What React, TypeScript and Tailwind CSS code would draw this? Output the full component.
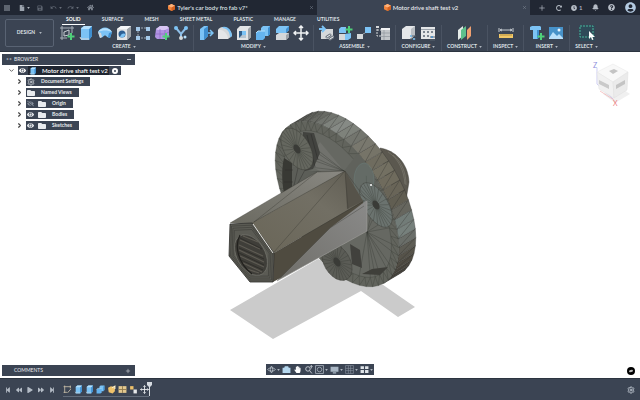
import { ReactNode, useState } from "react";
import { Bell, ChevronDown, ChevronRight, Plus, Settings, X } from "lucide-react";
import {
  FaBackward,
  FaClock,
  FaEye,
  FaEyeSlash,
  FaFile,
  FaFolder,
  FaForward,
  FaHandPaper,
  FaHome,
  FaPlay,
  FaQuestionCircle,
  FaRedoAlt,
  FaSave,
  FaStepBackward,
  FaStepForward,
  FaUserCircle,
} from "react-icons/fa";
import { MdApps, MdRedo, MdUndo } from "react-icons/md";

type Pt = [number, number];

const BLUE = "#7cc3f5";
const BLUE_DARK = "#3f8fd0";
const GREY = "#d5d8da";
const GREY_DARK = "#9ea4aa";
const GREEN = "#4fd07a";

function Glyph({ children, className = "size-4" }: { children: ReactNode; className?: string }) {
  return (
    <svg viewBox="0 0 16 16" className={className} fill="none" aria-hidden="true">
      {children}
    </svg>
  );
}

const greenPlus = <path d="M12 8v7M8.500 11.500h7" stroke={GREEN} strokeWidth="2" />;

const icons: Record<string, ReactNode> = {
  sketch: (
    <>
      <path d="M3 1v14M1 3h14M13 1v7M1 13h7" stroke="#aab1ba" />
      <path d="M5 11V7l5-2v5z" stroke="#c9ced4" />
      {greenPlus}
    </>
  ),
  extrude: (
    <>
      <path d="M3 3l3-2h8v10l-3 4H3z" fill={BLUE} />
      <path d="M11 4l3-3v10l-3 4z" fill={BLUE_DARK} />
      <path d="M3 4l3-3h8l-3 3z" fill="#b6e0fc" />
      <path d="M2 12l1 2h8" stroke={GREY} />
    </>
  ),
  revolve: (
    <>
      <path d="M1 7c3-6 11-6 14 0l-2 6-3-1c-1-2-3-2-4 0l-3 1z" fill={BLUE} />
      <path d="M1 7c3-5 11-5 14 0-4-2-10-2-14 0z" fill="#b6e0fc" />
      <path d="M12 8l3-1-2 6-2-1z" fill={BLUE_DARK} />
      <path d="M1 7l3 1 1 4-2 1z" fill={GREY} />
    </>
  ),
  hole: (
    <>
      <path d="M1 4l4-3h10v10l-4 4H1z" fill="#e2e4e6" />
      <path d="M11 4l4-3v10l-4 4z" fill={GREY_DARK} />
      <path d="M1 4l4-3h10l-4 3z" fill="#f6f7f8" />
      <circle cx="6" cy="9" r="3.500" fill="#2d5f93" />
      <path d="M4 12c1-4 4-4 5.500-3-1 3-2.500 4-5.500 3z" fill={BLUE} />
    </>
  ),
  pattern: (
    <>
      <path d="M3 3h10M3 13h10M3 3v10" stroke="#9ca6b2" strokeDasharray="2 1" />
      <path d="M1 2h4v4H1zM1 11h4v4H1zM11 2h4v4h-4zM11 11h4v4h-4z" fill="#a4c9ea" />
    </>
  ),
  form: (
    <>
      <path d="M2 4l4-3h7l2 2v8l-4 3H3l-2-2z" fill="#b193e2" />
      <path d="M2 4l4-3h7l2 2-4 2H4z" fill="#d8c6f4" />
      <path d="M6 4v10M1 9h10M11 5v8M11 9l4-2" stroke="#8a69c2" strokeWidth=".7" />
      {greenPlus}
    </>
  ),
  derive: (
    <>
      <path d="M3 3l5 6 5-6M8 9v5" stroke="#8fbfe8" strokeWidth="2" />
      <circle cx="3" cy="3" r="2" fill={BLUE} />
      <circle cx="13" cy="3" r="2" fill={BLUE} />
      <circle cx="8" cy="13" r="2" fill={GREY} />
      <circle cx="12" cy="12" r="1.500" fill="#b6e0fc" />
    </>
  ),
  pressPull: (
    <>
      <path d="M2 4l4-3h4v10l-4 4H2z" fill={BLUE} />
      <path d="M6 4l4-3v10l-4 4z" fill={BLUE_DARK} />
      <path d="M10 8h5M12 5l3 3-3 3" stroke={BLUE} strokeWidth="1.500" />
    </>
  ),
  fillet: (
    <>
      <path d="M1 14V6c0-3 3-4 5-4 5 0 9 5 9 9l-4 3z" fill={GREY} />
      <path d="M6 2c5-1 9 4 9 9l-2 1.500C13 7 10 3 5 3z" fill={BLUE} />
      <path d="M1 5c5-1 10 4 10 9H1z" fill="#e4e6e8" />
    </>
  ),
  shell: (
    <>
      <path d="M1 4l3-3h11v11l-3 3H1z" fill="#e2e4e6" />
      <path d="M12 4l3-3v11l-3 3z" fill={GREY_DARK} />
      <path d="M3 6h7v7H3z" fill="#315f8c" />
      <path d="M6 6h4v4H6z" fill={BLUE} />
      <path d="M3 13l3-3h4v3z" fill="#b6c4d0" />
    </>
  ),
  combine: (
    <>
      <path d="M6 3l2-2h7v8l-2 2H6z" fill={BLUE} />
      <path d="M13 3l2-2v8l-2 2z" fill={BLUE_DARK} />
      <path d="M1 8l2-2h7v7l-2 2H1z" fill="#65b4ef" />
      <path d="M1 8l2-2h7" stroke="#b6e0fc" />
    </>
  ),
  split: (
    <>
      <path d="M2 4l3-3h10v4l-3 3H2z" fill={BLUE} />
      <path d="M12 4l3-3v4l-3 3z" fill={BLUE_DARK} />
      <path d="M2 10l3-2h10v4l-3 3H2z" fill={GREY} />
      <path d="M12 10l3-2v4l-3 3z" fill={GREY_DARK} />
    </>
  ),
  move: (
    <path
      d="M8 1v14M1 8h14M6 3l2-2 2 2M6 13l2 2 2-2M3 6L1 8l2 2M13 6l2 2-2 2"
      stroke="#f0f2f4"
      strokeWidth="1.500"
    />
  ),
  insertPart: (
    <>
      <path d="M3 6l3-2h9v8l-3 2H3z" fill={GREY} />
      <path d="M1 4h6M4 1l3 3-3 3" stroke={BLUE} strokeWidth="1.800" />
      <path d="M9 12l3-2M12 14l3-2" stroke="#6e7680" strokeWidth="3" strokeLinecap="round" />
      <path d="M9 12l3-2M12 14l3-2" stroke="#f0f2f4" strokeLinecap="round" />
    </>
  ),
  newPart: (
    <>
      <path d="M2 4l2-2h5v6H2z" fill={BLUE} />
      <path d="M2 9h6v6H2z" fill={GREY} />
      <path d="M8 9l6-1v5l-3 2H8z" fill={BLUE} />
      <path d="M12 1v7M8.500 4.500h7" stroke={GREEN} strokeWidth="2" />
    </>
  ),
  joint: (
    <>
      <path d="M9 2h6v6H9z" fill={BLUE} />
      <path d="M1 9h6v5H1z" fill={GREY} />
      <path d="M7 9l2-1" stroke={GREY_DARK} />
    </>
  ),
  bom: (
    <>
      <path d="M2 1v10h4M2 5h4" stroke={GREY} strokeDasharray="2 1" />
      <path d="M6 3h9v12H6z" fill="#c2c6ca" />
      <path d="M6 3h9v2H6z" fill="#f2f3f4" />
      <path d="M6 8h9M6 11.500h9M9 5v10" stroke="#8f969e" strokeWidth=".7" />
      <path d="M1 1h3v2H1z" fill={GREY} />
    </>
  ),
  configure: (
    <>
      <path d="M1 4l4-3h9v9l-4 4H1z" fill="#e4e6e8" />
      <path d="M10 4l4-3v9l-4 4z" fill="#b9bec3" />
      <path d="M9 11h6M9 14h6" stroke="#59626e" />
      <path d="M10 10v2M13 13v2" stroke={BLUE} strokeWidth="1.500" />
    </>
  ),
  table: (
    <>
      <path d="M1 2h14v12H1z" fill="#e4e6e8" />
      <path d="M3 6h2v2H3zM7 6h2v2H7zM11 6h2v2h-2zM3 10h2v2H3zM7 10h2v2H7z" fill="#7c8590" />
      <path d="M1 4.500h14" stroke="#7c8590" strokeWidth=".7" />
      <path d="M10 12h5M10 15h5" stroke="#59626e" />
      <path d="M12 11v2" stroke={BLUE_DARK} strokeWidth="1.500" />
    </>
  ),
  construct: (
    <>
      <path d="M1 5l5-4v10l-5 4z" fill="#e6ebe9" />
      <path d="M4 5l5-4v10l-5 4z" fill="#5fc08c" />
      <path d="M10 5l4-4v10l-4 4z" fill="#f0a070" />
    </>
  ),
  inspect: (
    <>
      <path d="M1 9h14v4H1z" fill="#f2c867" />
      <path d="M3 9v2M5 9v2M7 9v2M9 9v2M11 9v2M13 9v2" stroke="#8a6c28" strokeWidth=".6" />
      <path d="M1 3v4M15 3v4M2 5h12M4 4L2 5l2 1M12 4l2 1-2 1" stroke="#c5cad0" />
    </>
  ),
  insert: (
    <>
      <path d="M1 2l2-1h8l1 1v3H9v9H4V5H1z" fill={BLUE} />
      <path d="M8 5h2v8l-2 1z" fill={BLUE_DARK} />
      {greenPlus}
    </>
  ),
  image: (
    <>
      <path d="M1 2h14v12H1z" fill="#4792c9" />
      <path d="M1 13l4-6 4 4 2-2 4 4v1H1z" fill="#b9dffa" />
      <circle cx="11" cy="5" r="1.500" fill="#e9f5fe" />
    </>
  ),
  select: (
    <>
      <path d="M1 1h13v11H1z" stroke="#4bb59a" strokeDasharray="2 1" />
      <path d="M10 6v8l2-2 1 3 1.500-.6L13.300 12H16z" fill="#fff" />
    </>
  ),
};

type Group = { label: string; tools: string[]; wide?: boolean };

const groups: Group[] = [
  {
    label: "CREATE",
    tools: ["sketch", "extrude", "revolve", "hole", "pattern", "form", "derive"],
  },
  { label: "MODIFY", tools: ["pressPull", "fillet", "shell", "combine", "split", "move"] },
  { label: "ASSEMBLE", tools: ["insertPart", "newPart", "joint", "bom"] },
  { label: "CONFIGURE", tools: ["configure", "table"], wide: true },
  { label: "CONSTRUCT", tools: ["construct"], wide: true },
  { label: "INSPECT", tools: ["inspect"], wide: true },
  { label: "INSERT", tools: ["insert", "image"], wide: true },
  { label: "SELECT", tools: ["select"], wide: true },
];

const workspaces = ["SOLID", "SURFACE", "MESH", "SHEET METAL", "PLASTIC", "MANAGE", "UTILITIES"];

function Caret() {
  return (
    <svg viewBox="0 0 4 3" className="h-[2px] w-[3px] shrink-0" aria-hidden="true">
      <path d="M0 0h4L2 3z" fill="#aeb5be" />
    </svg>
  );
}

function DocCube() {
  return (
    <svg viewBox="0 0 8 8" className="size-[7px] shrink-0" aria-hidden="true">
      <path d="M4 0l4 2v4L4 8 0 6V2z" fill="#f0843c" />
      <path d="M4 0l4 2-4 2-4-2z" fill="#ffb27a" />
      <path d="M4 4l4-2v4L4 8z" fill="#d5611f" />
    </svg>
  );
}

function DocTab({ title, active }: { title: string; active?: boolean }) {
  return (
    <div
      className={
        active
          ? "flex flex-1 items-center bg-[#3b4453] px-[3px] text-[#e6e9ed]"
          : "flex flex-1 items-center px-[3px] text-[#dde1e6]"
      }
    >
      <button className="flex flex-1 items-center justify-center gap-[2px]">
        <DocCube />
        {title}
      </button>
      <button aria-label={"Close " + title}>
        <X className="size-[5px] text-[#8b94a0]" />
      </button>
    </div>
  );
}

function TopBar() {
  return (
    <header className="flex h-[15px] bg-[#212733] text-[6px] font-semibold text-[#9aa2ad]">
      <div className="flex w-[104px] shrink-0 items-center pl-[3px]">
        <button aria-label="Data panel" className="w-4"><MdApps className="size-[8px]" /></button>
        <button aria-label="File" className="flex w-[18px] items-center gap-[2px]">
          <FaFile className="size-[6px]" />
          <Caret />
        </button>
        <button aria-label="Save" className="w-[13px]"><FaSave className="size-[6px] opacity-50" /></button>
        <button aria-label="Undo" className="flex w-[17px] items-center gap-[2px] opacity-50">
          <MdUndo className="size-[7px]" />
          <Caret />
        </button>
        <button aria-label="Redo" className="flex w-[20px] items-center gap-[2px] opacity-50">
          <MdRedo className="size-[7px]" />
          <Caret />
        </button>
        <button aria-label="Home"><FaHome className="size-[7px] opacity-80" /></button>
      </div>
      <DocTab title="Tyler's car body fro fab v7*" />
      <DocTab title="Motor drive shaft test v2" active />
      <div className="flex w-[110px] shrink-0 items-center justify-between pr-1 pl-2 text-[#b6bdc6]">
        <button aria-label="New tab"><Plus className="size-[8px]" /></button>
        <button aria-label="Extensions"><FaRedoAlt className="size-[6px]" /></button>
        <button aria-label="Jobs" className="flex items-center gap-[2px]">
          <FaClock className="size-[6px]" />1
        </button>
        <button aria-label="Notifications"><Bell className="size-[7px]" fill="currentColor" /></button>
        <button aria-label="Help"><FaQuestionCircle className="size-[7px]" /></button>
        <button aria-label="Account" className="text-[#b4cbe2]">
          <FaUserCircle className="size-[11px]" />
        </button>
      </div>
    </header>
  );
}

function Toolbar() {
  const [tab, setTab] = useState("SOLID");
  return (
    <div className="flex h-[37px] border-b border-[#2c3440] bg-[#3b4453] text-[5px] font-bold text-[#dfe3e8]">
      <button className="my-1 ml-[5px] flex w-[49px] shrink-0 items-center justify-center gap-1 rounded-xs border border-[#596373]">
        DESIGN <Caret />
      </button>
      <div className="flex flex-1 flex-col">
        <nav className="flex h-[10px] gap-[13px] pl-2">
          {workspaces.map((w) => (
            <button
              key={w}
              onClick={() => setTab(w)}
              className={
                w === tab
                  ? "border-b border-white px-1 whitespace-nowrap text-white"
                  : "border-b border-transparent px-1 whitespace-nowrap"
              }
            >
              {w}
            </button>
          ))}
        </nav>
        <div className="flex flex-1 pl-px">
          {groups.map((g) => (
            <div
              key={g.label}
              className={
                g.wide
                  ? "flex flex-col items-center border-r border-[#4a5362] px-[5px] last:border-r-0"
                  : "flex flex-col items-center border-r border-[#4a5362] px-1"
              }
            >
              <div className="flex gap-[3px]">
                {g.tools.map((t) => (
                  <button
                    key={t}
                    aria-label={t}
                    className={t === "select" ? "bg-[#2f4a58]" : undefined}
                  >
                    <Glyph>{icons[t]}</Glyph>
                  </button>
                ))}
              </div>
              <button className="mt-[2px] flex h-[8px] items-center gap-[2px]">
                {g.label} <Caret />
              </button>
            </div>
          ))}
        </div>
      </div>
    </div>
  );
}

const treeRows = [
  { label: "Document Settings", kind: "gear" },
  { label: "Named Views", kind: "folder" },
  { label: "Origin", kind: "hidden" },
  { label: "Bodies", kind: "visible" },
  { label: "Sketches", kind: "visible" },
];

function BrowserPanel() {
  return (
    <section className="w-[133px] text-[5px] font-bold text-[#e8ebee]">
      <div className="flex h-[11px] items-center bg-[#3b4453] px-1 font-normal">
        <span className="w-2 text-[#8b94a0]">••</span>
        <h2 className="flex-1">BROWSER</h2>
        <button aria-label="Collapse" className="h-px w-1 bg-[#c0c6cd]" />
      </div>
      <ul className="mt-px flex flex-col gap-[2px]">
        <li className="flex h-[9px] items-center pl-[6px]">
          <button aria-label="Collapse root" className="w-[10px]">
            <ChevronDown className="size-[7px] text-[#555]" strokeWidth={3} />
          </button>
          <div className="flex h-[9px] items-center bg-[#3b4453] pl-px text-white">
            <FaEye className="size-[7px]" />
            <div className="ml-[2px] flex h-[9px] items-center bg-[#202631] pr-px pl-px text-[6px] font-semibold">
              <Glyph className="mr-[5px] size-[8px]">{icons.extrude}</Glyph>
              Motor drive shaft test v2
            </div>
            <span className="mx-[3px] size-[6px] rounded-full border-2 border-white" />
          </div>
        </li>
        {treeRows.map((r) => (
          <li key={r.label} className="flex h-[9px] items-center pl-[14px]">
            <button aria-label={"Expand " + r.label} className="w-[10px]">
              <ChevronRight className="size-[7px] text-[#444]" strokeWidth={4} />
            </button>
            <div className="flex h-[9px] items-center gap-1 bg-[#3b4453] pr-[7px] pl-px">
              {r.kind === "gear" && <Settings className="mr-[2px] size-[8px]" />}
              {r.kind === "hidden" && <FaEyeSlash className="size-[7px] text-[#8b94a0]" />}
              {r.kind === "visible" && <FaEye className="size-[7px]" />}
              {r.kind !== "gear" && <FaFolder className="mr-[2px] size-[8px]" />}
              {r.label}
            </div>
          </li>
        ))}
      </ul>
    </section>
  );
}

// disc axis in screen space: U runs along the long radius, V along the shaft
const U: Pt = [0.507, 0.862];
const V: Pt = [0.862, -0.507];

function onEllipse(c: Pt, a: number, b: number, t: number): Pt {
  const p = a * Math.cos(t);
  const q = b * Math.sin(t);
  return [c[0] + p * U[0] + q * V[0], c[1] + p * U[1] + q * V[1]];
}

function ring(c: Pt, a: number, b: number, n: number) {
  return Array.from({ length: n }, (_, i) => onEllipse(c, a, b, (i / n) * Math.PI * 2));
}

const str = (pts: Pt[]) => pts.map((p) => p[0].toFixed(1) + "," + p[1].toFixed(1)).join(" ");

const FRONT: Pt = [337, 204];
const BACK: Pt = [354, 194];
const RECESS = ring([338, 204], 82, 39, 52);

const rimShades = [
  "#4d4941", "#48443c", "#4a463e", "#504c43", "#56534a", "#5e5d55", "#6a6e69", "#76807c",
  "#727c78", "#66665e", "#615e52", "#696558", "#6f6b5d", "#737062", "#6f6c5f", "#767468",
  "#79786e", "#73756e", "#7e827b", "#868a85", "#7e827c", "#71746e", "#686a64", "#61635d",
  "#5a5c56", "#555751",
];

function Rim() {
  const n = rimShades.length;
  return (
    <g stroke="#30312d" strokeWidth=".35">
      {rimShades.map((fill, i) => {
        const t0 = (i / n) * Math.PI;
        const t1 = ((i + 1) / n) * Math.PI;
        const a = onEllipse(FRONT, 92, 47, t0);
        const b = onEllipse(FRONT, 92, 47, t1);
        const c = onEllipse(BACK, 92, 47, t1);
        const d = onEllipse(BACK, 92, 47, t0);
        return (
          <g key={i}>
            <polygon points={str([a, b, c, d])} fill={fill} />
            <path d={`M${a[0]} ${a[1]}L${c[0]} ${c[1]}`} />
          </g>
        );
      })}
    </g>
  );
}

function FaceBand() {
  const outer = ring(FRONT, 92, 47, 52);
  return (
    <g stroke="#34352f" strokeWidth=".3" fill="none">
      <polygon points={str(outer)} fill="#62645d" />
      {outer.map((p, i) => {
        const q = RECESS[i];
        const r = RECESS[(i + 1) % RECESS.length];
        return <path key={i} d={`M${q[0]} ${q[1]}L${p[0]} ${p[1]}L${r[0]} ${r[1]}`} />;
      })}
      <polygon points={str(RECESS)} fill="#666862" />
    </g>
  );
}

function Fan({ from, to }: { from: Pt; to: Pt[] }) {
  return (
    <path
      d={to.map((p) => `M${from[0]} ${from[1]}L${p[0]} ${p[1]}`).join("")}
      stroke="#383935"
      strokeWidth=".35"
      fill="none"
    />
  );
}

function Boss({ c, a, b, fill }: { c: Pt; a: number; b: number; fill: string }) {
  const edge = ring(c, a, b, 24);
  return (
    <g>
      <polygon points={str(edge)} fill={fill} stroke="#34352f" strokeWidth=".4" />
      <Fan from={c} to={edge} />
      <polygon points={str(ring(c, 5, 3, 12))} fill="#3a3b37" />
    </g>
  );
}

const hex: Pt[] = [[230, 224], [252, 223], [274, 253], [273, 282], [250, 282], [229, 256]];

function insetHex(k: number): Pt[] {
  return hex.map((p) => [251 + (p[0] - 251) * k, 254 + (p[1] - 254) * k]);
}

function Model() {
  return (
    <svg viewBox="220 90 200 250" className="h-[250px] w-[200px]" role="img" aria-label="Drive shaft">
      <defs>
        <linearGradient id="top" x1="0" x2="1" y1="1" y2="0">
          <stop offset="0" stopColor="#6b6a61" />
          <stop offset="1" stopColor="#898882" />
        </linearGradient>
        <linearGradient id="side" x1="0" x2="1" y1="1" y2="0">
          <stop offset="0" stopColor="#6a6658" />
          <stop offset=".6" stopColor="#726f64" />
          <stop offset="1" stopColor="#5f5c52" />
        </linearGradient>
        <linearGradient id="under" x1="0" x2="1" y1="1" y2="0">
          <stop offset="0" stopColor="#6f6e69" />
          <stop offset="1" stopColor="#8a8a89" />
        </linearGradient>
      </defs>
      <path d="M230 310l88-51 58 21 39 27-17 10-37-26-88 48z" fill="#cbcbcb" />
      <path d="M380 148c14 2 28 14 29 34l-3 18-20-20z" fill="#5b584f" stroke="#34352f" strokeWidth=".4" />
      <path d="M388 152c10 6 16 18 17 32M393 155c9 7 13 18 13 30" stroke="#77756b" strokeWidth=".8" fill="none" />
      <Rim />
      <FaceBand />
      <path d="M320 142l24 29-22 1-16-8z" fill="#71726d" />
      <path d="M344 171l14-18 14 18 8 22-16 10z" fill="#60625c" />
      <Fan from={[344, 171]} to={RECESS.slice(26, 47).filter((_, i) => i % 3 !== 2)} />
      <Fan from={[367, 232]} to={RECESS.filter((_, i) => (i < 15 || i > 47) && i % 3 !== 1)} />
      <path d="M284 158l8 5 1 31-8 4c-3-12-4-28-1-40z" fill="#383934" />
      <path d="M292 166l24 6-24 22z" fill="#5c5e58" />
      <path d="M292 194l6-26M292 194l14-26M284 182h9M285 170h8" stroke="#2b2c29" strokeWidth=".4" />
      <path d="M303 132l11 1 6 20-7 16-8 2-2-20z" fill="#42433f" />
      <path d="M307 135l8 32M311 134l7 26" stroke="#2a2b28" strokeWidth=".5" />
      <Boss c={[297, 149]} a={23} b={13} fill="#65675f" />
      <ellipse cx="364" cy="180" rx="10" ry="17" fill="#6d807e" fillOpacity=".3" stroke="#6d807e" strokeWidth=".4" />
      <path d="M350 244l10 6 2 18-10-4z" fill="#41413d" />
      <path d="M362 274l10-5 16-2-8 8z" fill="#3f3f3a" />
      <Boss c={[337, 262]} a={20} b={13} fill="#5b5c56" />
      <Boss c={[376, 205]} a={25} b={12} fill="#6b736f" />
      <circle cx="371" cy="185" r="1" fill="#fff" />

      <g strokeLinejoin="round">
        <polygon points="230,223 317,172 345,171 252,224" fill="url(#top)" />
        <polygon points="252,223 345,171 363,201 274,253" fill="url(#side)" />
        <polygon points="345,171 363,201 347,209" fill="#56534a" />
        <polygon points="274,253 363,201 367,231 273,282" fill="#4f4b40" />
        <polygon points="367,200 367,231 277,281 330,228" fill="url(#under)" />
        <path
          d="M230 223l87-51 28-1 22 30M252 223l93-52M254 222l63-50M274 252l71-81M345 171l3 38M274 253l90-52M277 281l53-53 34-22"
          stroke="#34332e"
          strokeWidth=".35"
          fill="none"
        />
        <path d="M277 281l90-50v-30" stroke="#a2a2a0" strokeWidth=".6" fill="none" />
      </g>

      <polygon points={str(hex)} fill="#5b5b54" stroke="#2b2b28" strokeWidth=".8" />
      {[0.93, 0.86, 0.79].map((k) => (
        <polygon key={k} points={str(insetHex(k))} fill="none" stroke="#363632" strokeWidth=".5" />
      ))}
      <path d="M253 224l20 29" stroke="#e4e4e0" strokeWidth="1" />
      <polygon points={str(ring([251, 255], 22, 14, 32))} fill="#3f3e39" stroke="#86867e" strokeWidth=".5" />
      <path
        d="M240 240l20 9M239 245l24 11M239 250l25 12M240 256l24 11M243 263l19 9M243 236l15 6M247 269l12 4"
        stroke="#5e5b53"
        strokeWidth="1.200"
      />
      <path d="M240 238l22 11M239 248l25 11M239 253l25 12M241 260l22 10" stroke="#262522" strokeWidth=".6" />
      <path d="M240 235c-6 11-2 28 12 39" stroke="#22211e" strokeWidth="1.200" fill="none" />
    </svg>
  );
}

function ViewCube() {
  return (
    <svg viewBox="0 0 40 50" className="h-[50px] w-[40px]" role="img" aria-label="View cube">
      <path d="M12 33l12 9 15-9-12-8z" fill="#f0f0f0" />
      <path d="M6 7v16l16 15" stroke="#b9b9ee" strokeWidth=".7" fill="none" />
      <path d="M9 30l14 9" stroke="#f3b0b0" strokeWidth=".7" />
      <path d="M6 11l16-8 15 8-15 10z" fill="#f8f8f8" stroke="#e6e6e6" strokeWidth=".5" />
      <path d="M6 11l16 10 1 16-15-9z" fill="#f1f1f1" stroke="#e2e2e2" strokeWidth=".5" />
      <path d="M37 11L22 21l1 16 13-8z" fill="#ebebeb" stroke="#dedede" strokeWidth=".5" />
      <path d="M18 10l5-2 4 2-5 3z" fill="#c4c4c4" />
      <path d="M8 19l10 5v4l-10-5z" fill="#cacaca" />
      <path d="M25 24l9-5v4l-9 5z" fill="#c4c4c4" />
      <text x="2" y="7" fontSize="7" fill="#8f8fdc">Z</text>
      <text x="22" y="45" fontSize="7" fill="#ec8080">X</text>
    </svg>
  );
}

const navTools = [
  { name: "Orbit", caret: true, art: <path d="M8 2c3 3 3 9 0 12-3-3-3-9 0-12zM1 8c4-4 10-4 14 0-4 4-10 4-14 0z" stroke="#b9c1ca" strokeWidth="1.500" /> },
  { name: "Look at", caret: false, art: <path d="M1 5h3l1-3h6l1 3h3v9H1z" fill="#b5d7ee" /> },
  { name: "Pan", caret: false, art: null },
  { name: "Zoom", caret: false, art: <path d="M7 3a4 4 0 100 8 4 4 0 000-8zM10 10l4 5M13 1v5M11 3l2-2 2 2" stroke="#d5dae0" strokeWidth="1.500" /> },
  { name: "Fit", caret: true, art: <path d="M1 1h14v14H1zM8 4a4 4 0 100 8 4 4 0 000-8z" stroke="#a5adb8" strokeWidth="1.500" /> },
  { name: "Display", caret: true, art: <path d="M1 3h14v9H1zM5 13h6v2H5z" fill="#a9b6c4" /> },
  { name: "Grid", caret: true, art: <path d="M1 1h14v14H1zM1 6h14M1 10h14M6 1v14M10 1v14" stroke="#8f99a6" /> },
  { name: "Viewports", caret: true, art: <path d="M1 2h6v5H1zM9 2h6v5H9zM1 9h6v5H1zM9 9h6v5H9z" fill="#e0e4e9" /> },
];

function NavBar() {
  return (
    <div className="flex h-[11px] items-center gap-[2px] bg-[#3b4453] px-px text-white">
      {navTools.map((t) => (
        <button key={t.name} aria-label={t.name} className="flex items-center gap-px">
          {t.art ? <Glyph className="size-[9px]">{t.art}</Glyph> : <FaHandPaper className="mx-px size-[7px]" />}
          {t.caret && <Caret />}
        </button>
      ))}
    </div>
  );
}

const features: { name: string; art: ReactNode }[] = [
  { name: "Sketch", art: <path d="M3 1v13M1 3h13M13 1v5M1 13h6M8 14l6-7" stroke="#c9bfa8" strokeWidth="1.500" /> },
  { name: "Extrude 1", art: icons.extrude },
  { name: "Extrude 2", art: icons.extrude },
  { name: "Combine", art: icons.combine },
  { name: "Form", art: <><path d="M2 5l5-3 7 2v7l-4 4-7-2z" fill="#efc26b" /><path d="M9 5l5-3v5" stroke="#fff0c8" strokeWidth="2" /></> },
  { name: "Mesh", art: <><path d="M1 2h14v12H1z" fill="#e3c88f" /><path d="M8 2v12M1 8h14" stroke="#8a744a" strokeWidth="1.500" /></> },
  { name: "Convert", art: <><path d="M2 2h6v6H2z" fill="#efc26b" /><path d="M8 8h6v7H8z" fill="#e6e8ea" /></> },
  { name: "Move", art: icons.move },
];

function Timeline() {
  return (
    <footer className="flex h-[22px] items-center border-t border-[#2c3440] bg-[#3b4453] px-[5px] text-[#b3bbc5]">
      <div className="flex w-[58px] items-center gap-[5px]">
        <button aria-label="Start"><FaStepBackward className="size-[6px]" /></button>
        <button aria-label="Previous"><FaBackward className="size-[6px]" /></button>
        <button aria-label="Play"><FaPlay className="size-[6px]" /></button>
        <button aria-label="Next"><FaForward className="size-[6px]" /></button>
        <button aria-label="End"><FaStepForward className="size-[6px]" /></button>
      </div>
      <div className="flex items-start">
        <div className="flex gap-[2px] border-b border-[#626c7a] pt-[3px] pb-[2px]">
          {features.map((f) => (
            <button key={f.name} aria-label={f.name}>
              <Glyph className="size-[9px]">{f.art}</Glyph>
            </button>
          ))}
        </div>
        <svg viewBox="0 0 5 14" className="-ml-[2px] h-[14px] w-[5px]" aria-hidden="true">
          <path d="M0 0h5v3L3 5v9H2V5L0 3z" fill="#d5dae0" />
        </svg>
      </div>
      <button aria-label="Timeline settings" className="ml-auto">
        <Settings className="size-[8px]" strokeWidth={3} />
      </button>
    </footer>
  );
}

export default function App() {
  return (
    <div className="flex h-screen flex-col bg-white font-['Lato',sans-serif]">
      <TopBar />
      <Toolbar />
      <main className="relative flex flex-1 items-center justify-center overflow-hidden">
        <Model />
        <div className="absolute top-[2px] left-[2px]">
          <BrowserPanel />
        </div>
        <div className="absolute top-[9px] right-[9px]">
          <ViewCube />
        </div>
        <section className="absolute bottom-[2px] left-[2px] flex h-[11px] w-[133px] items-center bg-[#3b4453] pr-1 pl-3 text-[5px] text-[#e8ebee]">
          <h2 className="flex-1">COMMENTS</h2>
          <button aria-label="Add comment"><Plus className="size-[6px]" /></button>
        </section>
        <div className="absolute bottom-[3px] left-1/2 -translate-x-1/2">
          <NavBar />
        </div>
        <button
          aria-label="Assistant"
          className="absolute right-[5px] bottom-[3px] flex size-[8px] items-center justify-center rounded-full bg-black"
        >
          <span className="h-[2px] w-1 -rotate-12 rounded-full bg-[#bbb]" />
        </button>
      </main>
      <Timeline />
    </div>
  );
}
